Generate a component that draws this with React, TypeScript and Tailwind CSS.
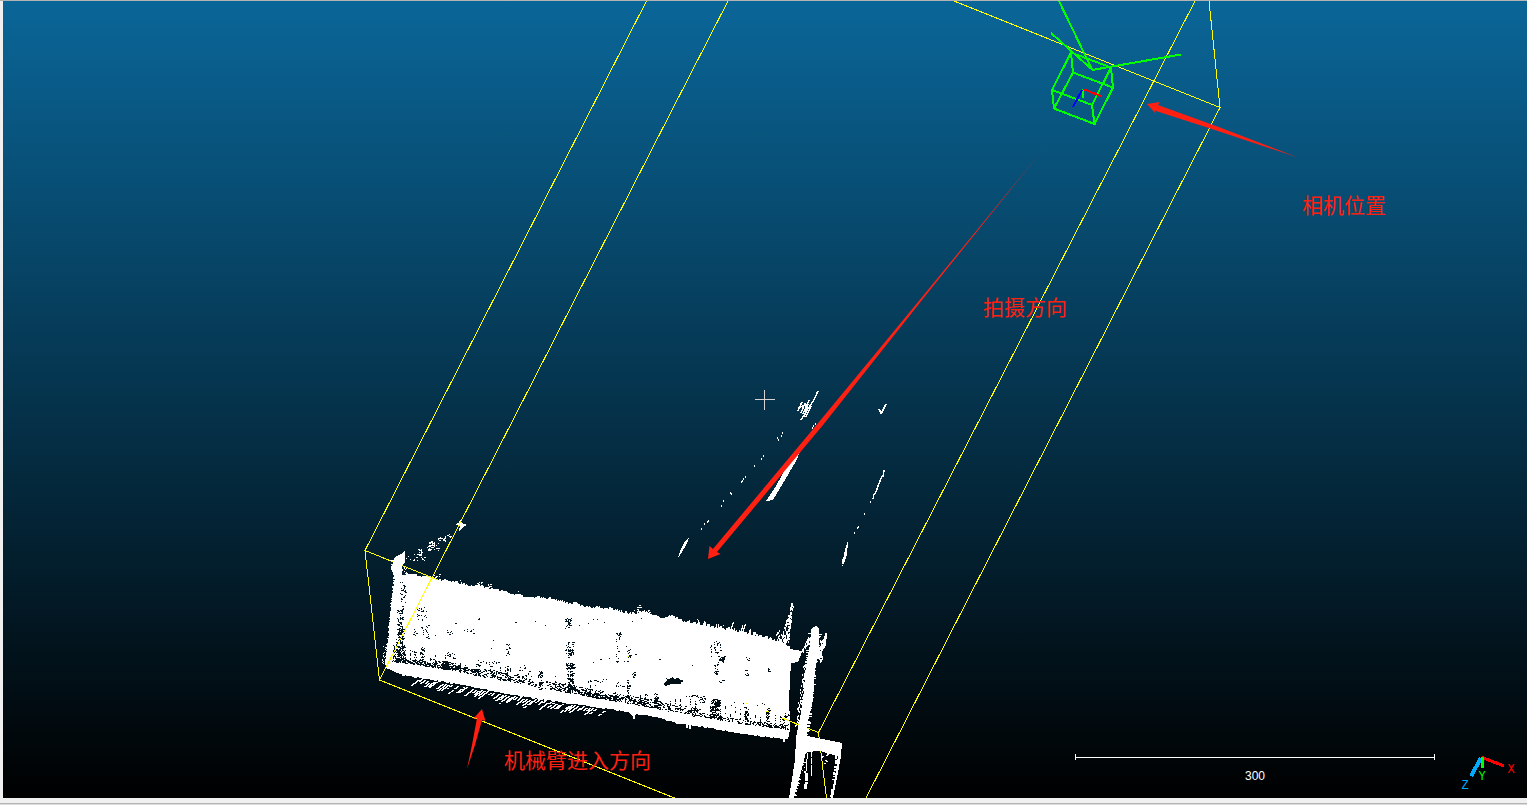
type Pt = [number, number];

const makeRandom = (seed: number) => {
  let a = seed;
  return () => {
    a = (a + 0x6d2b79f5) | 0;
    let t = Math.imul(a ^ (a >>> 15), 1 | a);
    t = (t + Math.imul(t ^ (t >>> 7), 61 | t)) ^ t;
    return ((t ^ (t >>> 14)) >>> 0) / 4294967296;
  };
};

const cell = (x: number, y: number, w = 1, h = 1) =>
  `M${Math.round(x)} ${Math.round(y)}h${w}v${h}h${-w}z`;

const edgeAt = (edge: Pt[], x: number) => {
  for (let i = 1; i < edge.length; i++) {
    const [x0, y0] = edge[i - 1];
    const [x1, y1] = edge[i];
    if (x <= x1) return y0 + ((x - x0) / (x1 - x0)) * (y1 - y0);
  }
  return edge[edge.length - 1][1];
};

const toPoints = (pts: Pt[]) => pts.map((p) => p.join(",")).join(" ");

const topEdge: Pt[] = [
  [402, 575], [412, 575], [431, 578], [436, 580], [453, 582], [470, 586], [478, 586], [485, 588],
  [500, 591], [512, 594], [530, 598], [541, 598], [552, 600], [562, 601], [571, 605], [577, 602],
  [580, 606], [595, 608], [610, 609], [617, 611], [630, 614], [647, 614], [660, 618], [674, 617],
  [680, 621], [697, 624], [710, 627], [722, 629], [745, 633], [765, 638], [785, 643], [790, 649], [802, 651],
];

const bottomEdge: Pt[] = [
  [386, 668], [403, 675], [447, 682], [500, 692], [540, 699], [575, 704], [610, 709], [627, 711],
  [632, 715], [640, 714], [657, 717], [677, 723], [707, 727], [740, 733], [788, 739],
];

/* lower limit of the solid rim under the speckled strip */
const rimEdge: Pt[] = [
  [392, 661], [420, 665], [447, 669], [480, 676], [520, 683], [560, 691], [600, 698],
  [640, 705], [670, 711], [700, 716], [740, 723], [788, 729],
];

const slab: Pt[] = [
  [391, 569], [395, 557], [401, 554], [405, 550], [405, 562], [402, 566],
  ...topEdge,
  [801, 655], [798, 662], [791, 663], [790, 680], [789, 700], [790, 722], [790, 730], [788, 739],
  ...[...bottomEdge].reverse(),
  [385, 662], [389, 635], [390, 615], [393, 590], [395, 578],
];

/* x0, y0, x1, y1, point count */
type Patch = [number, number, number, number, number];

const holePatches: Patch[] = [
  [400, 582, 406, 610, 32], [397, 608, 403, 640, 95], [396, 636, 404, 662, 90], [393, 645, 405, 662, 85],
  [417, 606, 419, 622, 7], [421, 607, 426, 622, 14], [421, 625, 429, 638, 20], [420, 646, 424, 664, 28],
  [413, 629, 416, 636, 7], [447, 630, 452, 635, 7], [462, 629, 475, 633, 8], [447, 652, 455, 658, 14],
  [412, 651, 416, 663, 14], [506, 643, 509, 655, 12], [506, 663, 508, 675, 12], [489, 661, 492, 672, 9],
  [476, 660, 479, 676, 12], [528, 670, 531, 684, 12], [538, 671, 542, 689, 42],
  [565, 618, 571, 628, 34], [565, 641, 574, 655, 48], [568, 653, 572, 658, 8], [566, 663, 574, 669, 62],
  [567, 671, 573, 692, 95], [616, 632, 621, 639, 16], [616, 641, 618, 666, 10], [616, 681, 618, 700, 15],
  [627, 648, 631, 657, 12], [632, 669, 635, 677, 9], [627, 680, 629, 702, 22], [654, 693, 657, 707, 40],
  [644, 694, 647, 706, 15], [713, 641, 721, 653, 22], [718, 656, 724, 662, 30], [714, 661, 718, 674, 20],
  [710, 644, 712, 657, 8], [717, 679, 723, 682, 5], [746, 656, 749, 660, 5], [745, 669, 748, 676, 8],
  [767, 668, 770, 672, 6], [711, 699, 720, 706, 70], [710, 706, 716, 716, 65], [716, 703, 718, 719, 14],
  [744, 706, 748, 724, 34], [766, 708, 769, 727, 44], [692, 704, 695, 716, 20],
  [588, 679, 606, 682, 14], [619, 685, 628, 686, 8], [480, 661, 500, 663, 11], [685, 695, 704, 697, 12],
  [699, 697, 706, 703, 13], [590, 658, 640, 664, 4], [576, 618, 610, 625, 5], [430, 605, 560, 660, 9],
  [590, 610, 700, 670, 7], [727, 701, 765, 707, 6], [517, 665, 526, 680, 9], [780, 713, 790, 728, 30],
];

const buildHoles = () => {
  const r = makeRandom(71);
  let d = "";
  for (const [x0, y0, x1, y1, n] of holePatches) {
    for (let i = 0; i < n; i++) d += cell(x0 + r() * (x1 - x0), y0 + r() * (y1 - y0), r() > 0.75 ? 2 : 1);
  }
  for (let x = 392; x < 788; x++) {
    const base = edgeAt(rimEdge, x);
    const band = x < 430 ? 5 : x < 560 ? 8 : x < 700 ? 8 : 4;
    const wave = 0.65 + 0.35 * Math.sin(x / 11);
    for (let i = 0; i < 7; i++) {
      if (r() < wave * (x > 700 ? 0.36 : 0.62)) d += cell(x, base - Math.pow(r(), 1.4) * band, r() > 0.6 ? 2 : 1);
    }
    if (x % 5 === 0 && r() > 0.4) {
      const reach = 6 + r() * 10;
      for (let k = 0; k < reach; k += 1) if (r() > 0.5) d += cell(x, base - k);
    }
  }
  for (let i = 0; i < 75; i++) {
    const t = r();
    d += cell(440 + t * 40, 663 + t * 6 + r() * 4, 2);
    d += cell(586 + t * 30, 691 + t * 5 + r() * 5, 2);
    if (i < 45) d += cell(442 + r() * 7, 661 + r() * 8, 2);
  }
  return d;
};

const buildFringe = () => {
  const r = makeRandom(19);
  let d = "";
  for (let x = 404; x < 790; x++) {
    const y = edgeAt(topEdge, x);
    const rough = x > 695 ? 4 : x > 610 && x < 652 ? 3 : 1;
    if (r() > 0.5) {
      const h = 1 + Math.round(r() * r() * rough);
      d += cell(x, y - h, r() > 0.5 ? 2 : 1, h + 2);
    }
    if (x > 690 && r() > 0.84) {
      const h = 3 + Math.round(r() * 6);
      for (let k = 0; k < h; k++) d += cell(x + k / 3, y - k, 1, 2);
    }
    if (r() > 0.965) d += cell(x, y - 3 - r() * 3);
  }
  for (let x = 390; x < 788; x += 2) {
    if (r() > 0.6) d += cell(x, edgeAt(bottomEdge, x) - 1, 3, 2);
  }
  for (const x of [633, 686, 689, 783]) d += cell(x, edgeAt(bottomEdge, x), 2, 4);
  for (let y = 560; y < 664; y++) {
    const x = 395 - Math.max(0, y - 575) * 0.1;
    if (r() > 0.55) d += cell(x - 1 - r(), y, 3);
    if (y < 572 && r() > 0.3) d += cell(x - 2 - r() * 3, y, 5);
    if (y > 645 && r() > 0.4) d += cell(x - 2 - r() * 3, y);
  }
  for (let x = 418; x < 606; x += 3) {
    if (r() > 0.88) continue;
    const y = edgeAt(bottomEdge, x);
    const len = 3 + Math.round(r() * 7);
    const start = y + 1 + r() * 2;
    for (let k = 0; k < len; k++) if (r() > 0.08) d += cell(x - k, start + k * 0.75, 2);
  }
  const spray: Patch[] = [
    [429, 541, 434, 547, 30], [427, 544, 431, 551, 12], [417, 549, 421, 556, 16], [438, 537, 446, 541, 18],
    [443, 534, 452, 538, 9], [413, 553, 424, 560, 14], [426, 543, 440, 551, 10],
    [404, 556, 414, 564, 5], [431, 574, 440, 580, 13], [391, 563, 397, 571, 30], [402, 565, 406, 574, 12],
    [636, 604, 640, 614, 18], [640, 609, 650, 615, 26], [476, 580, 482, 587, 9], [487, 584, 492, 589, 8],
  ];
  for (const [x0, y0, x1, y1, n] of spray) {
    for (let i = 0; i < n; i++) d += cell(x0 + r() * (x1 - x0), y0 + r() * (y1 - y0), r() > 0.7 ? 2 : 1);
  }
  for (let i = 0; i < 95; i++) {
    const t = r();
    d += cell(792 - t * 8 + (r() - 0.5) * (2 + t * 7), 603 + t * 38, 1, 2);
  }
  for (let i = 0; i < 38; i++) d += cell(776 + r() * 13, 628 + r() * 14, 1, 2);
  for (let i = 0; i < 40; i++) {
    const t = r();
    d += cell(808 - t * 7 + r() * 2, 637 + t * 14, 1, 2);
  }
  for (let i = 0; i < 75; i++) {
    const t = r();
    d += cell(803 - t * 8 + r() * 5, 664 + t * 62, 1, 2);
  }
  for (let i = 0; i < 38; i++) {
    const t = r();
    d += cell(823 - t * 4 + (r() - 0.5) * 5, 638 + t * 22, 1, 3);
  }
  for (let y = 632; y < 736; y++) {
    const t = (y - 632) / 104;
    if (r() > 0.6) d += cell(808 - t * 9, y, 3);
    if (r() > 0.6) d += cell(818 - t * 13, y, 2 + Math.round(r() * 2));
  }
  for (let y = 752; y < 797; y++) {
    if (r() > 0.4) d += cell(803 - (y - 752) * 0.24, y, 2 + Math.round(r() * 2));
    if (r() > 0.4) d += cell(836 - (y - 752) * 0.13, y, 2);
    if (y < 790 && r() > 0.15) d += cell(807 - (y - 752) * 0.08, y, y > 772 ? 3 : 1);
    if (y < 780 && r() > 0.6) d += cell(801 + r() * 5, y);
    if (y < 775 && r() > 0.4) d += cell(811, y, 1, 2);
    if (y < 764 && r() > 0.3) d += cell(821 + r() * 7, y, 2);
  }
  return d;
};

const holes = buildHoles();
const fringe = buildFringe();

const dots: Pt[] = [
  [782, 432], [781, 435], [777, 437], [778, 439], [763, 455], [761, 458], [754, 465], [745, 476], [743, 478],
  [742, 480], [741, 481], [730, 492], [731, 493], [723, 500], [721, 505], [708, 520], [707, 521], [704, 523],
  [701, 528], [813, 425], [815, 423], [812, 427], [870, 501], [864, 513], [858, 526], [857, 527], [854, 532],
];
const dotPath = dots.map(([x, y]) => cell(x, y, 1, 2)).join("");

const label = "fill-[#ff2012] font-['Noto_Sans_CJK_SC',sans-serif] text-[21px]";

function Scene() {
  return (
    <svg
      className="block h-full w-full"
      viewBox="3 1 1524 797"
      preserveAspectRatio="xMidYMid slice"
      role="img"
      aria-label="Point cloud view"
    >
      <defs>
        <linearGradient id="sky" gradientUnits="userSpaceOnUse" x1="0" y1="1" x2="0" y2="798">
          <stop offset="0" stopColor="#0a6698" />
          <stop offset="1" stopColor="#000000" />
        </linearGradient>
        <linearGradient id="shot" gradientUnits="userSpaceOnUse" x1="1043" y1="150" x2="980" y2="226">
          <stop offset="0" stopColor="#ff2012" stopOpacity="0.7" />
          <stop offset="1" stopColor="#ff2012" />
        </linearGradient>
      </defs>
      <rect x="3" y="1" width="1524" height="797" fill="url(#sky)" />

      <g shapeRendering="crispEdges" fill="none" stroke="#ffff00">
        <path d="M646.5 1L365 550.500L379.500 680L674.500 798M365 550.500L438 580M954 1L1220 107.500L866 798M1209 1L1220 107.500M1195 1L818.500 732.500L826.500 798M782 718L818.500 732.500" />
      </g>

      <g shapeRendering="crispEdges" fill="#ffffff">
        <polygon points={toPoints(slab)} />
        <path d={holes} fill="url(#sky)" />
        <polygon points="664,684 667,680 665,678 669,679 673,677 674,679 678,678 680,680 685,681 681,682 681,684 672,684 665,686" fill="url(#sky)" />
        <polygon points="811,630 813,627 816,626 819,629 819,652 815,670 813,700 807,726 807,736 842,743 841,756 837,756 820,751 806,752 800,775 794,798 789,798 795,760 796,738 801,712 804,690 807,660 810,645" />
        <polygon points="825,633 827,633 826,645 822,652 819,657 823,645" />
        <polygon points="838,756 841,756 837,778 833,798 831,798 835,776" />
        <path d={fringe} />
        <path d={dotPath} />
        <polygon points="804,443 796,461 785,480 773,500 766,501 776,486 788,464" />
        <polygon points="690,536 686,545 682,552 678,558 680,551 684,543" />
        <polygon points="848,541 847,555 844,563 843,560 845,550" />
        <polygon points="455,524 459,523 460,519 462,523 467,525 463,527 459,531 460,526" />
        <g stroke="#ffffff" strokeWidth="1.500">
          <path d="M818 391L813 402M802 402L798 411M805 403L801 413M809 400L803 414M813 401L801 420M811 406L806 417M808 404L804 417M798 408L808 404M886 404L881 414M879 409L881 413M884 470L883 477M882 476L875 494M874 494L873 499M843 559L843 564" />
        </g>
        <rect x="842" y="565" width="1" height="1" />
      </g>

      <g shapeRendering="crispEdges" fill="none">
        <path d="M728 1L379.500 680M427 576L438 580M782 718L799 725" stroke="#ffff00" />
        <path d="M746 703.500h1M766 711.500h3M627 656.500h2" stroke="#ffff00" />
        <path
          stroke="#00ff00"
          strokeWidth="2"
          d="M1059 1L1092 69.500L1051 33M1092 70L1181 54.500M1071 52.500L1111 67.500L1113 87.500L1073 72.500ZM1052 90L1092 105L1094.500 124L1054 108.500ZM1071 52.500L1052 90M1111 67.500L1092 105M1073 72.500L1054 108.500M1113 87.500L1094.500 124M1083 89V98"
        />
        <path stroke="#ff0000" strokeWidth="2" d="M1083 89L1102 96.500" />
        <path stroke="#0000ff" strokeWidth="2" d="M1082 90L1073 107" />
        <path stroke="#d8d2d2" d="M755 399.500H775M764.500 390V410" />
        <path stroke="#ffffff" d="M1075 757.500H1435M1075.500 754V760M1434.500 754V760" />
        <path stroke="#ff0000" strokeWidth="3" d="M1482 757.500L1504 766" />
        <path stroke="#00aaff" strokeWidth="4" d="M1481 758L1471 776" />
        <path stroke="#00ff00" strokeWidth="3" d="M1482 757V768" />
      </g>

      <g fill="#ff2012">
        <polygon points="708,559 709.500,546 713,549 819,422 925,293.500 1043,149.500 926,295 823,425 717,552 720.500,554" fill="url(#shot)" />
        <polygon points="1147,104 1160,102 1158,105 1220,127.500 1298,157.500 1218,131 1154.500,110.500 1156,114" />
        <polygon points="482,709 485.500,721 482,720 475,745 467,769 472,745 477,718 473,719" />
      </g>

      <text x="1302" y="213" className={label}>相机位置</text>
      <text x="983" y="315" className={label}>拍摄方向</text>
      <text x="504" y="768" className={label}>机械臂进入方向</text>
      <text x="1255" y="780" textAnchor="middle" className="fill-white font-['Liberation_Sans',sans-serif] text-[12px]">300</text>
      <g textAnchor="middle" className="font-['Liberation_Mono',monospace] text-[12px]">
        <text x="1511" y="773" fill="#ff0000">X</text>
        <text x="1482" y="780" fill="#00ff00">Y</text>
        <text x="1465" y="789" fill="#00aaff">Z</text>
      </g>
    </svg>
  );
}

export default function App() {
  return (
    <div className="flex h-screen flex-col overflow-hidden border-t border-[#b4b4b4] bg-[#f0f0f0]">
      <main className="min-h-0 flex-1 pl-[3px]">
        <Scene />
      </main>
      <footer className="flex h-[7px] shrink-0 flex-col justify-end">
        <div className="h-px bg-[#b4b4b4]" />
        <div className="h-px bg-[#dcdcdc]" />
      </footer>
    </div>
  );
}
